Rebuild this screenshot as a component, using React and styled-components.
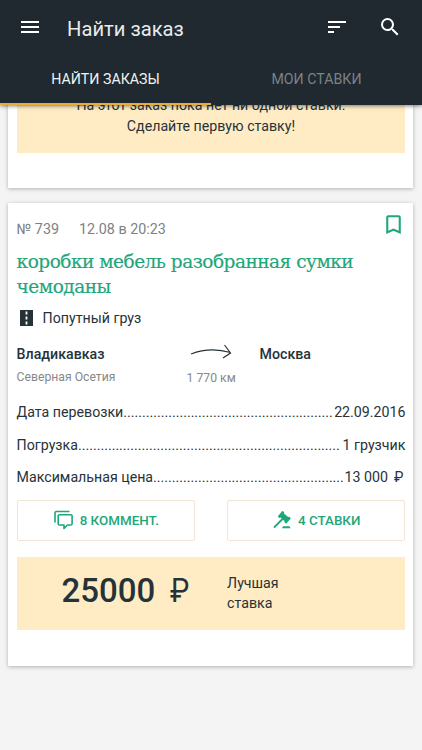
import React from 'react';
import styled, { createGlobalStyle } from 'styled-components';
import { MdMenu, MdSort, MdSearch, MdBookmarkBorder } from 'react-icons/md';

const GlobalStyle = createGlobalStyle`
  * {
    box-sizing: border-box;
  }
  body {
    margin: 0;
    background: #f4f4f4;
    color: #263238;
    font-family: Roboto, sans-serif;
    font-size: 14.2px;
  }
`;

const Screen = styled.div`
  height: 750px;
  overflow: hidden;
`;

const Header = styled.header`
  position: relative;
  z-index: 1;
  height: 105px;
  background: #1f292f;
  box-shadow: 0 1px 4px rgba(0, 0, 0, 0.5);
`;

const Toolbar = styled.div`
  display: flex;
  align-items: center;
  height: 54px;
  padding: 0 20px 0 18px;
  color: #fff;

  svg {
    flex: none;
    font-size: 24px;
  }
`;

const Title = styled.h1`
  flex: 1;
  margin: 4px 0 0 25px;
  font-size: 20.2px;
  line-height: 28px;
  font-weight: 400;
  color: #e9eaeb;
`;

const Actions = styled.div`
  display: flex;
  gap: 29px;
`;

const Tabs = styled.nav`
  display: grid;
  grid-template-columns: 1fr 1fr;
  height: 51px;
`;

const Tab = styled.a`
  display: flex;
  align-items: center;
  justify-content: center;
  padding-top: 1px;
  border-bottom: 2px solid ${props => props.$active ? '#e9ae3a' : 'transparent'};
  color: ${props => props.$active ? '#f1f2f2' : '#7c8286'};
`;

const Feed = styled.main`
  display: flex;
  flex-direction: column;
  gap: 15px;
  margin-top: -26px;
  padding: 0 8.6px 0 8.3px;
`;

const Card = styled.article`
  padding: 16px 8px 35px 8.3px;
  background: #fff;
  box-shadow: 0 1px 4px rgba(0, 0, 0, 0.28);
`;

const EmptyBids = styled.p`
  margin: 0;
  padding-bottom: 16px;
  background: #ffecc5;
  text-align: center;
  line-height: 21px;
`;

const Meta = styled.div`
  display: flex;
  align-items: center;
  gap: 20px;
  height: 19px;
  color: #7d8184;
  font-size: 14.3px;

  svg {
    margin: -9px -1px 0 auto;
    color: #1fa67a;
    font-size: 25px;
  }
`;

const Name = styled.h2`
  margin: 12px 0 0;
  color: #1fa67a;
  font-family: 'DejaVu Serif', serif;
  font-size: 18.5px;
  line-height: 24.5px;
  font-weight: 400;
  letter-spacing: -0.5px;
  -webkit-text-stroke: 0.2px #1fa67a;
`;

const Kind = styled.div`
  display: flex;
  align-items: center;
  gap: 10px;
  height: 24px;
  margin-top: 7px;
  padding-left: 3px;
`;

const Route = styled.div`
  display: grid;
  grid-template-columns: 165px 78px 1fr;
  height: 58px;
  margin-top: 14px;
`;

const City = styled.div`
  line-height: 20px;
  font-weight: 500;
`;

const Small = styled.div`
  margin-top: 3px;
  color: #85898b;
  font-size: 12.2px;
  font-weight: 400;
`;

const Distance = styled.div`
  display: flex;
  flex-direction: column;
  line-height: 20px;

  ${Small} {
    margin: 4px 0 0 5px;
  }
`;

const Detail = styled.div`
  display: flex;
  height: 32.7px;
  line-height: 20px;
  white-space: pre;
`;

const Dots = styled.span`
  flex: 1;
`;

const Currency = styled.span`
  margin: 0 2px 0 6px;
`;

const Buttons = styled.div`
  display: grid;
  grid-template-columns: 1fr 1fr;
  gap: 32px;
`;

const Button = styled.button`
  display: flex;
  align-items: center;
  justify-content: center;
  gap: 7px;
  height: 41px;
  padding: 0 0 1px 1px;
  border: 1px solid #f0e6d6;
  border-radius: 2px;
  background: #fff;
  color: #1fa67a;
  font: 500 13.4px Roboto, sans-serif;
`;

const BestBid = styled.div`
  display: grid;
  grid-template-columns: 210.5px 1fr;
  height: 73px;
  margin: 16px 0 1px;
  background: #ffecc5;
`;

const Price = styled.div`
  display: flex;
  gap: 15px;
  padding: 13px 0 0 45px;
  font-size: 33px;
  line-height: 41px;
  font-weight: 500;
`;

const Ruble = styled.span`
  font-weight: 400;
  transform: scaleX(0.88);
  transform-origin: left;
`;

const BestLabel = styled.div`
  width: 80px;
  padding-top: 15.5px;
  line-height: 20.7px;
`;

const RoadIcon = () => (
  <svg width="13" height="16" viewBox="0 0 13 16">
    <path fill="#263238" d="M0 0h13v16H0z" />
    <path stroke="#fff" strokeWidth="1.8" d="M6.5 1.5v3M6.5 6.5v3M6.5 11.5v3" />
  </svg>
);

const ArrowIcon = () => (
  <svg width="60" height="20" viewBox="0 0 60 20" fill="none" stroke="#263238" strokeWidth="1.2">
    <path d="M9 10Q28 2.500 48.500 8.500M42.500 1l6 8-7.500 5" />
  </svg>
);

const CommentsIcon = () => (
  <svg width="19" height="20" viewBox="0 0 19 20" fill="none" stroke="currentColor" strokeWidth="1.6" strokeLinejoin="round">
    <path d="M1 12.500V3q0-1.500 1.500-1.500H15.500" />
    <path d="M5.500 4.800h11.300q1.300 0 1.300 1.300v7.600q0 1.300-1.300 1.300h-3.300L10 18.500V15H5.500q-1.300 0-1.300-1.300V6.100q0-1.300 1.300-1.300z" />
  </svg>
);

const GavelIcon = () => (
  <svg width="18" height="18" viewBox="0 0 18 18" fill="currentColor">
    <g transform="rotate(41 11.3 6.300)">
      <path d="M7 3.600h8.600v5.400H7z" />
      <rect x="5.700" y="2.600" width="2.600" height="7.400" rx=".7" />
      <rect x="14.300" y="2.600" width="2.600" height="7.400" rx=".7" />
    </g>
    <path d="M9.500 8L.9 16.600" stroke="currentColor" strokeWidth="1.900" />
    <path d="M10 15.200h6.500l1 2H9z" />
  </svg>
);

const details = [
  { label: 'Дата перевозки', dots: 56, value: '22.09.2016' },
  { label: 'Погрузка', dots: 70, value: '1 грузчик' },
  { label: 'Максимальная цена', dots: 51, value: '13 000', currency: '₽' }
];

const DetailRow = ({ label, dots, value, currency }) => (
  <Detail>
    <span>{label}</span>
    <Dots>{'.'.repeat(dots)}</Dots>
    <span>{value}</span>
    {currency && <Currency>{currency}</Currency>}
  </Detail>
);

export default function App() {
  return (
    <Screen>
      <GlobalStyle />
      <Header>
        <Toolbar>
          <MdMenu />
          <Title>Найти заказ</Title>
          <Actions>
            <MdSort />
            <MdSearch />
          </Actions>
        </Toolbar>
        <Tabs>
          <Tab $active>НАЙТИ ЗАКАЗЫ</Tab>
          <Tab>МОИ СТАВКИ</Tab>
        </Tabs>
      </Header>
      <Feed>
        <Card>
          <EmptyBids>
            На этот заказ пока нет ни одной ставки.<br />
            Сделайте первую ставку!
          </EmptyBids>
        </Card>
        <Card>
          <Meta>
            <span>№ 739</span>
            <span>12.08 в 20:23</span>
            <MdBookmarkBorder />
          </Meta>
          <Name>коробки мебель разобранная сумки<br />чемоданы</Name>
          <Kind>
            <RoadIcon />
            Попутный груз
          </Kind>
          <Route>
            <City>
              Владикавказ
              <Small>Северная Осетия</Small>
            </City>
            <Distance>
              <ArrowIcon />
              <Small>1 770 км</Small>
            </Distance>
            <City>Москва</City>
          </Route>
          {details.map(item => <DetailRow key={item.label} {...item} />)}
          <Buttons>
            <Button><CommentsIcon />8 КОММЕНТ.</Button>
            <Button><GavelIcon />4 СТАВКИ</Button>
          </Buttons>
          <BestBid>
            <Price>25000 <Ruble>₽</Ruble></Price>
            <BestLabel>Лучшая ставка</BestLabel>
          </BestBid>
        </Card>
      </Feed>
    </Screen>
  );
}
